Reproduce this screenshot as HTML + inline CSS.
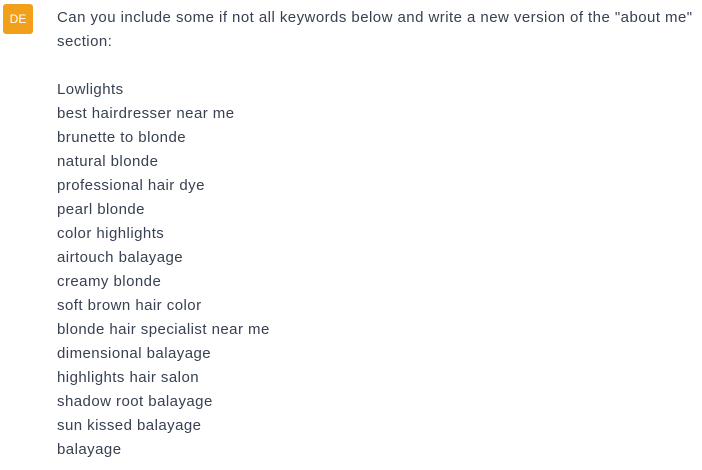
<!DOCTYPE html>
<html><head><meta charset="utf-8"><style>
html,body{margin:0;padding:0;background:#fff;width:702px;height:470px;overflow:hidden}
.av{position:absolute;left:3px;top:4px;width:30px;height:30px;background:#f2a01c;border-radius:3px;color:#fff;font:12px "Liberation Sans",sans-serif;display:flex;align-items:center;justify-content:center}
.t{position:absolute;left:57px;top:6px;width:645px;font:15px/24px "Liberation Sans",sans-serif;letter-spacing:0.45px;color:#374151;white-space:pre-line}
.n{white-space:nowrap}
</style></head><body>
<div class="av">DE</div>
<div class="t"><span class="n">Can you include some if not all keywords below and write a new version of the "about me"</span>
section:

Lowlights
best hairdresser near me
brunette to blonde
natural blonde
professional hair dye
pearl blonde
color highlights
airtouch balayage
creamy blonde
soft brown hair color
blonde hair specialist near me
dimensional balayage
highlights hair salon
shadow root balayage
sun kissed balayage
balayage</div>
</body></html>
